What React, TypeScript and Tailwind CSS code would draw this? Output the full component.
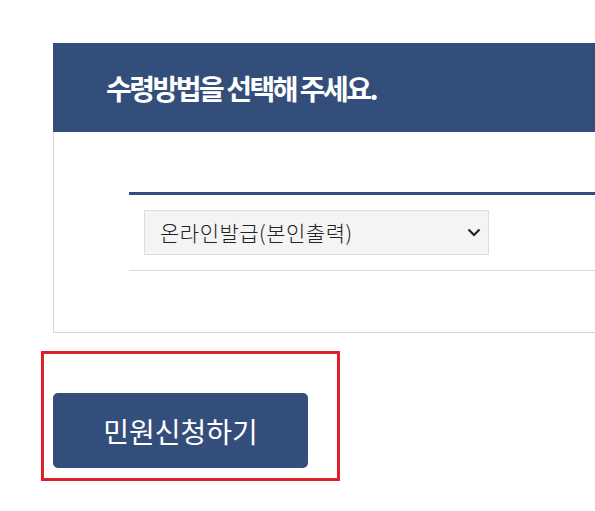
const navy = 'bg-[#344e7b]';

function Chevron() {
  return (
    <svg width="14" height="9" viewBox="0 0 14 9" fill="none">
      <path d="M1.5 1.5L7 7L12.5 1.5" stroke="#222" strokeWidth="2.2" />
    </svg>
  );
}

export default function App() {
  return (
    <div
      className="w-full min-h-[511px] overflow-hidden bg-white pt-[43px] pl-[53px]"
      style={{ fontFamily: '"Noto Sans CJK KR", "Noto Sans", sans-serif' }}
    >
      {/* panel */}
      <div className="w-[640px]">
        <div className={`${navy} h-[89px] flex items-center pl-[53px]`}>
          <h2 className="text-white font-bold text-[28px] tracking-[-2.5px] leading-none">
            수령방법을 선택해 주세요.
          </h2>
        </div>
        <div className="border-l border-b border-r border-[#d5d5d5] pt-[60px] pb-[61px] pl-[75px]">
          <div className="border-t-[3px] border-[#344e7b] border-b border-b-[#d9d9d9] p-[15px]">
            <div className="w-[345px] h-[45px] bg-[#f4f4f4] border border-[#dcdcdc] flex items-center justify-between pl-[15px] pr-[7px]">
              <span className="text-[21px] tracking-[0.5px] font-light text-[#222] leading-none">
                온라인발급(본인출력)
              </span>
              <Chevron />
            </div>
          </div>
        </div>
      </div>

      {/* button area */}
      <div className="-ml-[12px] mt-[18px] w-[299px] h-[130px] border-[3px] border-[#e0202a] pt-[39px] pl-[9px]">
        <button
          className={`${navy} w-[255px] h-[75px] rounded-[5px] text-white text-[28px] leading-none flex items-center justify-center`}
        >
          민원신청하기
        </button>
      </div>
    </div>
  );
}
